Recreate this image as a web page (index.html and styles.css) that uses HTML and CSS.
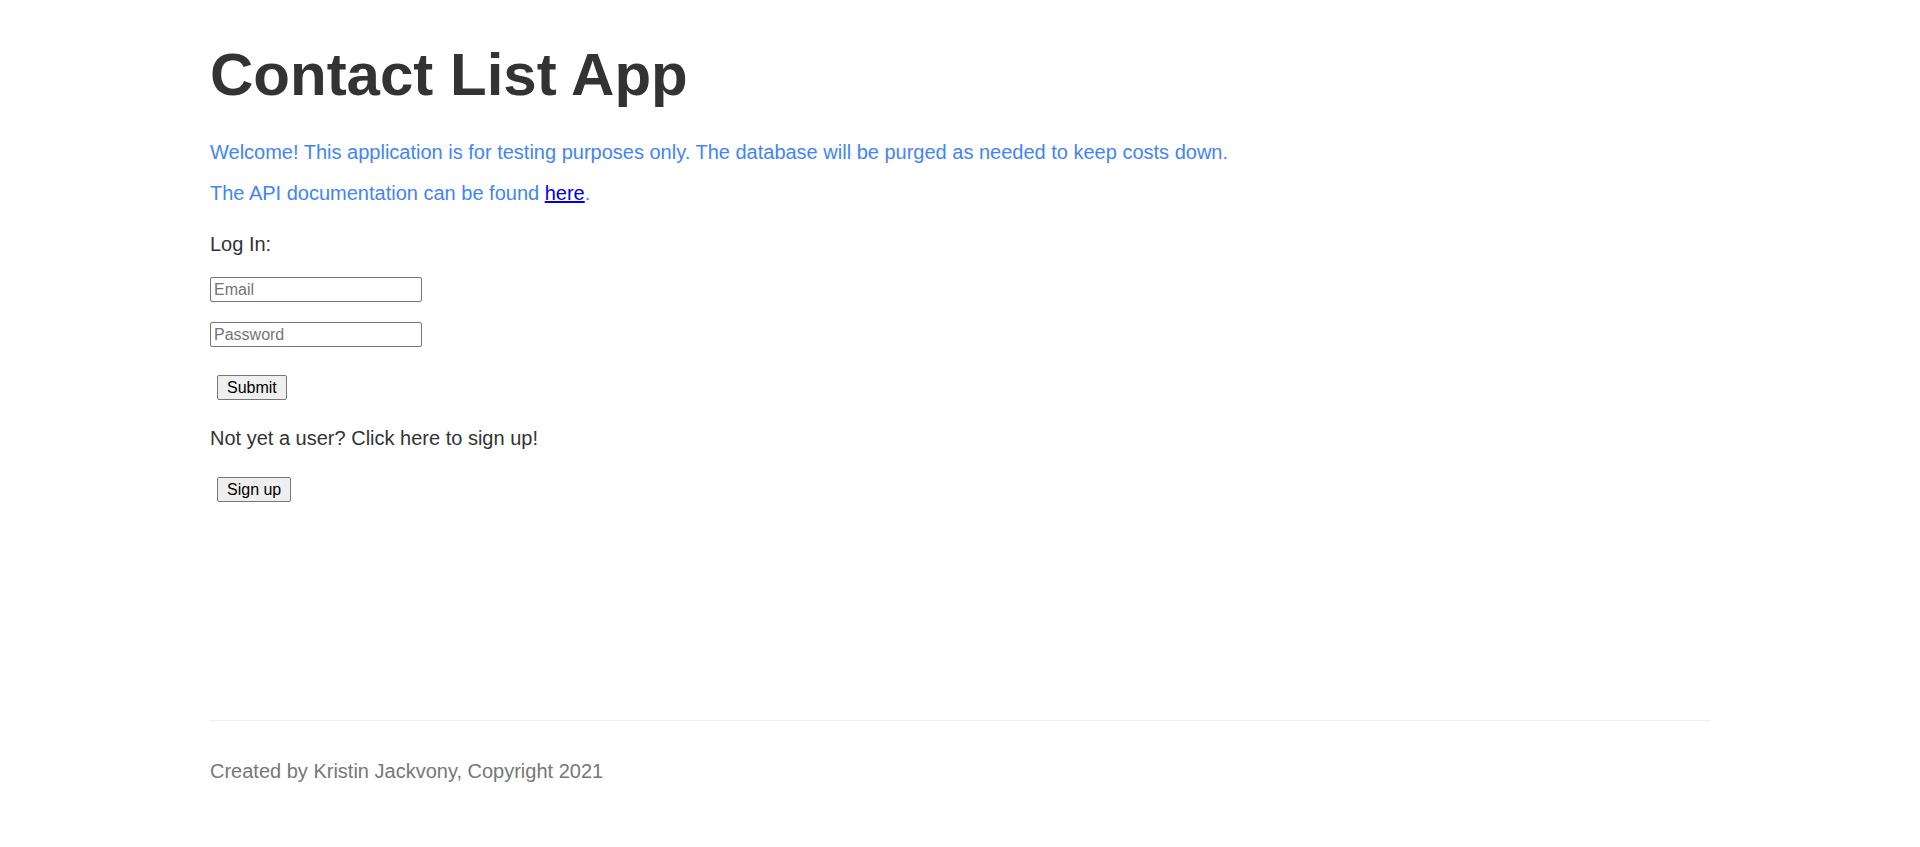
FILE: index.html
```html
<!DOCTYPE html>
<html lang="en">
<head>
<meta charset="utf-8">
<title>Contact List App</title>
<link rel="stylesheet" href="styles.css">
</head>
<body>
<div class="container">
  <header>
    <h1 class="title">Contact List App</h1>
  </header>
  <div class="main">
    <p class="welcome">Welcome! This application is for testing purposes only. The database will be purged as needed to keep costs down.</p>
    <p class="welcome api">The API documentation can be found <a href="#">here</a>.</p>
    <p class="label">Log In:</p>
    <form class="login">
      <input class="field" type="text" placeholder="Email">
      <input class="field field-pass" type="password" placeholder="Password">
      <button class="btn btn-submit" type="button">Submit</button>
    </form>
    <p class="label signup-text">Not yet a user? Click here to sign up!</p>
    <button class="btn btn-signup" type="button">Sign up</button>
  </div>
  <footer class="footer">
    <p class="footer-text">Created by Kristin Jackvony, Copyright 2021</p>
  </footer>
</div>
</body>
</html>
```
FILE: styles.css
```css
html, body {
  margin: 0;
  padding: 0;
  background: #ffffff;
}
body {
  font-family: "Liberation Sans", Arial, sans-serif;
  color: #333333;
}
.container {
  width: 1500px;
  margin: 0 auto;
}
.title {
  font-size: 60px;
  line-height: 69px;
  font-weight: bold;
  color: #333333;
  margin: 40px 0 0 0;
}
.main {
  display: flow-root;
  height: 611px;
}
.welcome {
  font-size: 20px;
  line-height: 23px;
  color: #4285f4;
  margin: 32px 0 0 0;
}
.welcome.api {
  margin-top: 18px;
}
.welcome a {
  color: #0000ee;
  text-decoration: underline;
}
.label {
  font-size: 20px;
  line-height: 23px;
  color: #333333;
  margin: 28px 0 0 0;
}
.login {
  display: flex;
  flex-direction: column;
  align-items: flex-start;
  margin: 0;
}
.field {
  box-sizing: border-box;
  width: 212px;
  height: 25px;
  margin: 21px 0 0 0;
  padding: 0 3px;
  border: 1px solid #767676;
  border-radius: 2px;
  font-family: "Liberation Sans", Arial, sans-serif;
  font-size: 16px;
  color: #000;
  background: #fff;
}
.field::placeholder {
  color: #757575;
}
.field-pass {
  margin-top: 20px;
}
.btn {
  box-sizing: border-box;
  height: 25px;
  padding: 0 9px;
  border: 1px solid #767676;
  border-radius: 2px;
  background: #efefef;
  color: #000;
  font-family: "Liberation Sans", Arial, sans-serif;
  font-size: 16px;
  line-height: 23px;
  margin: 0 0 0 7px;
}
.btn-submit {
  margin-top: 28px;
}
.signup-text {
  margin-top: 27px;
}
.btn-signup {
  display: block;
  margin-top: 27px;
}
.footer {
  border-top: 1px solid #eeeeee;
  height: 126px;
  box-sizing: border-box;
  display: flow-root;
}
.footer-text {
  font-size: 20px;
  line-height: 23px;
  color: #777777;
  margin: 39px 0 0 0;
}
```
